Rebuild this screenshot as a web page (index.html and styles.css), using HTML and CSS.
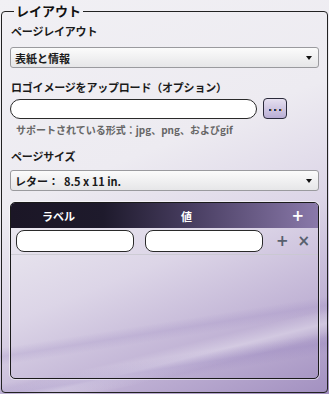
FILE: index.html
```html
<!DOCTYPE html>
<html lang="ja">
<head>
<meta charset="utf-8">
<link rel="stylesheet" href="styles.css">
</head>
<body>
<fieldset class="frame">
  <legend class="frame-title">レイアウト</legend>
  <div class="label first">ページレイアウト</div>
  <div class="select"><span>表紙と情報</span><span class="arrow"></span></div>
  <div class="label l2">ロゴイメージをアップロード（オプション）</div>
  <div class="upload">
    <div class="text-input wide"></div>
    <div class="browse"><span class="dot"></span><span class="dot"></span><span class="dot"></span></div>
  </div>
  <div class="hint">サポートされている形式：jpg、png、およびgif</div>
  <div class="label l3">ページサイズ</div>
  <div class="select"><span>レター：&nbsp; 8.5 x 11 in.</span><span class="arrow"></span></div>
  <div class="grid">
    <div class="grid-head">
      <span class="h-label">ラベル</span>
      <span class="h-value">値</span>
      <span class="h-add">+</span>
    </div>
    <div class="grid-row">
      <div class="text-input cell"></div>
      <div class="text-input cell c2"></div>
      <span class="row-add">+</span>
      <span class="row-del">×</span>
    </div>
  </div>
</fieldset>
</body>
</html>
```

FILE: styles.css
```css
html, body {
  margin: 0;
  height: 394px;
  overflow: hidden;
}
body {
  font-family: "Noto Sans CJK JP", "Noto Sans", sans-serif;
  color: #1a1a1a;
  background:
    linear-gradient(171deg, rgba(255,255,255,0) 78%, rgba(150,130,190,0.22) 80%, rgba(255,255,255,0) 82%, rgba(255,255,255,0) 86%, rgba(140,120,185,0.25) 88.5%, rgba(255,255,255,0) 91%),
    linear-gradient(166deg, rgba(255,255,255,0) 82%, rgba(255,255,255,0.35) 85%, rgba(255,255,255,0) 88%),
    linear-gradient(158deg, #f1f0f4 0%, #edebf1 40%, #dcd5e7 62%, #bfb1d4 82%, #a290c0 100%);
}
.frame {
  margin: 0 1px;
  height: 393px;
  box-sizing: border-box;
  padding: 0 8px 13px 8px;
  border: 1px solid #222;
  border-radius: 4px;
  display: flex;
  flex-direction: column;
}
.frame > * { flex-shrink: 0; }
.frame-title {
  font-size: 13px;
  font-weight: bold;
  line-height: 22px;
  padding: 0 2px;
  margin-left: 4px;
  color: #111;
}
.label {
  font-size: 11px;
  font-weight: bold;
  line-height: 18px;
  padding-left: 1px;
  letter-spacing: -0.2px;
}
.label.l2 { margin-top: 10px; }
.label.l3 { margin-top: 10px; }
.select {
  margin-top: 7px;
  height: 21px;
  box-sizing: border-box;
  border: 1px solid #9a9a9e;
  border-radius: 3px;
  background: linear-gradient(#fbfbfb, #e6e6e8);
  display: flex;
  align-items: center;
  justify-content: space-between;
  padding: 0 6px 0 4px;
  font-size: 11px;
  font-weight: bold;
}
.l3 + .select { margin-top: 5px; }
.arrow {
  width: 0;
  height: 0;
  border-left: 3.5px solid transparent;
  border-right: 3.5px solid transparent;
  border-top: 4px solid #111;
}
.upload {
  margin-top: 2px;
  display: flex;
  gap: 6px;
  align-items: center;
}
.text-input {
  box-sizing: border-box;
  background: #fff;
  border: 1px solid #2a2a2a;
  border-radius: 10px;
}
.wide {
  width: 247px;
  height: 20px;
}
.browse {
  width: 24px;
  height: 21px;
  box-sizing: border-box;
  border: 1px solid #2a2a3a;
  border-radius: 4px;
  background: linear-gradient(#e6e0f0, #b9aed4);
  display: flex;
  align-items: center;
  justify-content: center;
  gap: 3px;
  padding-top: 2px;
}
.dot {
  width: 2px;
  height: 2px;
  background: #1e3a78;
  box-shadow: 1px 0 0 #d99a40;
}
.hint {
  font-size: 10px;
  font-weight: bold;
  line-height: 14px;
  color: #666;
  margin-top: 4px;
  padding-left: 6px;
}
.grid {
  margin-top: 11px;
  height: 177px;
  box-sizing: border-box;
  border: 1px solid #1a1a1a;
  border-radius: 5px;
  overflow: hidden;
  box-shadow: 0 0 0 1px rgba(255,255,255,0.5);
}
.grid-head {
  height: 25px;
  background: linear-gradient(90deg, #1b1626 0%, #1e1a2c 30%, #4a3f63 60%, #8a79aa 100%);
  display: flex;
  align-items: center;
  color: #fff;
  font-size: 11px;
  font-weight: bold;
}
.h-label { margin-left: 31px; }
.h-value { margin-left: 106px; }
.h-add {
  margin-left: auto;
  margin-right: 14px;
  font-size: 15px;
  font-family: "DejaVu Sans", sans-serif;
}
.grid-row {
  height: 26px;
  border-bottom: 1px solid rgba(200,200,206,0.8);
  display: flex;
  align-items: center;
  padding-left: 5px;
}
.cell {
  width: 118px;
  height: 22px;
  border-radius: 8px;
}
.c2 { margin-left: 11px; width: 118px; }
.row-add, .row-del {
  color: #57606e;
  font-weight: bold;
  font-family: "DejaVu Sans", sans-serif;
}
.row-add { margin-left: 13px; font-size: 15px; }
.row-del { margin-left: 9px; font-size: 15px; }
```
